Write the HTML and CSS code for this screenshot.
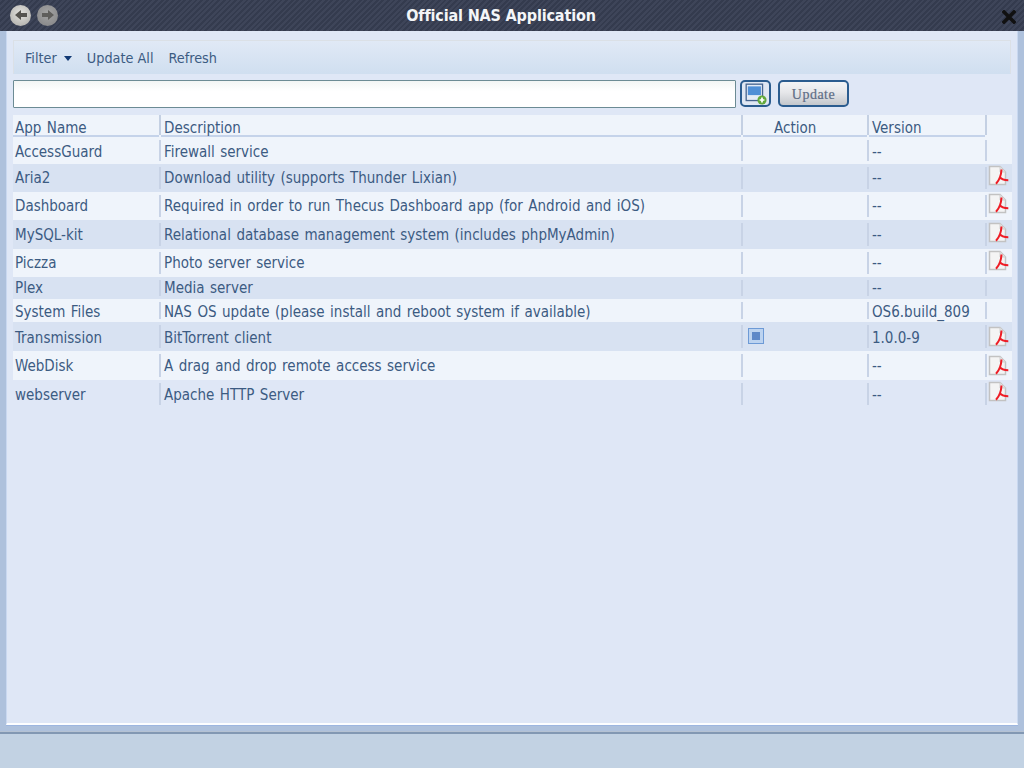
FILE: index.html
```html
<!DOCTYPE html>
<html lang="en">
<head>
<meta charset="utf-8">
<title>Official NAS Application</title>
<link rel="stylesheet" href="styles.css">
</head>
<body>
<svg class="defs" width="0" height="0" aria-hidden="true">
  <symbol id="pdf" viewBox="0 0 22 22">
    <path d="M2.500 1.500H13L18.500 7V19.500H2.500Z" fill="#f4f4f4" stroke="#c2c2c2" stroke-width="1.500"/>
    <path d="M13 1.500V7H18.500" fill="#e2e2e2" stroke="#cfcfcf"/>
    <path d="M14.500 4.500C14.200 9.500 13 14.500 9 18.800M12.600 11.500C14 14 17 15.300 21.300 15.300" fill="none" stroke="#ee1c25" stroke-width="2"/>
  </symbol>
</svg>
<div class="titlebar">
  <div class="nav">
    <span class="round back"><svg width="14" height="14" viewBox="0 0 14 14"><path d="M1 7L7 2V5H13V9H7V12Z" fill="#55534f"/></svg></span>
    <span class="round fwd"><svg width="14" height="14" viewBox="0 0 14 14"><path d="M13 7L7 2V5H1V9H7V12Z" fill="#5f5e5c"/></svg></span>
  </div>
  <h1 class="title">Official NAS Application</h1>
  <svg class="close" width="14" height="14" viewBox="0 0 14 14"><path d="M2 2L12 12M12 2L2 12" stroke="#111" stroke-width="3.600" stroke-linecap="square"/></svg>
</div>
<main class="window">
  <div class="toolbar">
    <span class="tool">Filter <i class="caret"></i></span>
    <span class="tool">Update All</span>
    <span class="tool">Refresh</span>
  </div>
  <div class="uploadrow">
    <div class="field"></div>
    <button class="iconbtn" type="button" aria-label="Browse">
      <svg width="24" height="24" viewBox="0 0 22 22">
        <rect x="2" y="2" width="15" height="15" fill="#e3ebf6" stroke="#46658f" stroke-width="1.200"/>
        <rect x="3.500" y="4" width="12" height="8" fill="#4f8fd6"/>
        <circle cx="16.500" cy="16.500" r="4.200" fill="#63a93c"/>
        <path d="M16.500 14.300V18.700M14.300 16.500H18.700" stroke="#fff" stroke-width="1.600"/>
      </svg>
    </button>
    <button class="updatebtn" type="button">Update</button>
  </div>
  <table class="apps">
    <colgroup><col class="c1"><col class="c2"><col class="c3"><col class="c4"><col class="c5"></colgroup>
    <thead>
      <tr><th>App Name</th><th>Description</th><th class="act">Action</th><th>Version</th><th class="nohead"></th></tr>
    </thead>
    <tbody>
      <tr class="h26 lt first"><td>AccessGuard</td><td>Firewall service</td><td></td><td>--</td><td></td></tr>
      <tr class="h28 dk"><td>Aria2</td><td>Download utility (supports Thunder Lixian)</td><td></td><td>--</td><td class="pdf"><svg width="22" height="22"><use href="#pdf"/></svg></td></tr>
      <tr class="h28 lt"><td>Dashboard</td><td>Required in order to run Thecus Dashboard app (for Android and iOS)</td><td></td><td>--</td><td class="pdf"><svg width="22" height="22"><use href="#pdf"/></svg></td></tr>
      <tr class="h29 dk"><td>MySQL-kit</td><td>Relational database management system (includes phpMyAdmin)</td><td></td><td>--</td><td class="pdf"><svg width="22" height="22"><use href="#pdf"/></svg></td></tr>
      <tr class="h28 lt"><td>Piczza</td><td>Photo server service</td><td></td><td>--</td><td class="pdf"><svg width="22" height="22"><use href="#pdf"/></svg></td></tr>
      <tr class="h22 dk"><td>Plex</td><td>Media server</td><td></td><td>--</td><td></td></tr>
      <tr class="h23 lt first"><td>System Files</td><td>NAS OS update (please install and reboot system if available)</td><td></td><td>OS6.build_809</td><td></td></tr>
      <tr class="h29 dk first"><td>Transmission</td><td>BitTorrent client</td><td class="radiocell"><span class="radio"></span></td><td>1.0.0-9</td><td class="pdf low"><svg width="22" height="22"><use href="#pdf"/></svg></td></tr>
      <tr class="h29 lt"><td>WebDisk</td><td>A drag and drop remote access service</td><td></td><td>--</td><td class="pdf low"><svg width="22" height="22"><use href="#pdf"/></svg></td></tr>
      <tr class="h28 nobg first"><td>webserver</td><td>Apache HTTP Server</td><td></td><td>--</td><td class="pdf"><svg width="22" height="22"><use href="#pdf"/></svg></td></tr>
    </tbody>
  </table>
</main>
<footer class="bottom"></footer>
</body>
</html>
```

FILE: styles.css
```css
* { box-sizing: border-box; }
html, body { margin: 0; height: 768px; overflow: hidden; }
body {
  display: flex;
  flex-direction: column;
  background: #aec1dc;
  font-family: "DejaVu Sans Condensed", "DejaVu Sans", sans-serif;
  font-size: 15px;
  word-spacing: 1.200px;
  color: #3c5b82;
}
.defs { position: absolute; }
.titlebar {
  height: 31px;
  flex: none;
  display: flex;
  align-items: center;
  justify-content: space-between;
  padding: 0 8px 0 10px;
  position: relative;
  background-color: #3a4256;
  background-image: repeating-linear-gradient(135deg, #3e4559 0 2px, #343b4e 2px 4px);
}
.nav { display: flex; gap: 6px; margin-top: -1px; }
.round {
  width: 21px;
  height: 21px;
  border-radius: 50%;
  display: flex;
  align-items: center;
  justify-content: center;
}
.back { background: radial-gradient(circle at 50% 40%, #e4e3df, #a9a8a4); }
.fwd { background: radial-gradient(circle at 50% 40%, #a5a5a5, #828284); }
.title {
  position: absolute;
  left: 0;
  right: 22px;
  top: 6px;
  margin: 0;
  text-align: center;
  font: bold 16px/20px "DejaVu Sans Condensed", "DejaVu Sans", sans-serif;
  letter-spacing: -0.150px;
  word-spacing: 0;
  color: #f4f6f8;
}
.close { margin-top: 2px; }
.window {
  flex: none;
  height: 694px;
  margin: 0 6px;
  background: #dfe7f6;
  border-bottom: 2px solid #fdfeff;
  border-left: 1px solid #c9d8f0;
  border-right: 1px solid #c9d8f0;
  box-shadow: 0 1px 0 #9db6e0;
  padding: 9px 6px 0 6px;
}
.toolbar {
  height: 34px;
  display: flex;
  align-items: center;
  gap: 15px;
  padding: 1px 0 0 11px;
  background: linear-gradient(#e0e9f6, #d0dff0);
  border: 1px solid #dbe0e6;
  border-bottom: 1px solid #d0dff0;
  font-size: 14.300px;
  word-spacing: 0;
}
.caret {
  display: inline-block;
  border: 4px solid transparent;
  border-top: 5px solid #123a75;
  border-bottom: 0;
  vertical-align: 2px;
  margin-left: 3px;
}
.uploadrow {
  display: flex;
  align-items: flex-start;
  height: 28px;
  margin-top: 6px;
}
.field {
  width: 723px;
  height: 28px;
  background: linear-gradient(#f2f5f4, #fff 40%);
  border: 1px solid #6c8b94;
  border-radius: 1px;
}
.iconbtn {
  width: 31px;
  height: 27px;
  margin-left: 4px;
  padding: 0;
  display: flex;
  align-items: center;
  justify-content: center;
  background: #dfe7f3;
  border: 2px solid #2b5c8f;
  border-radius: 5px;
}
.updatebtn {
  width: 71px;
  height: 27px;
  margin-left: 7px;
  padding: 2px 0 0;
  border: 2px solid #2b5c8f;
  border-radius: 5px;
  background: linear-gradient(#f3f4f6, #e6e7ea 45%, #c4c7cc);
  font: 14px "Liberation Serif", serif;
  letter-spacing: .5px;
  -webkit-text-stroke: .2px #5e6d85;
  color: #5e6d85;
}
.apps {
  width: 999px;
  margin-top: 7px;
  table-layout: fixed;
  border-collapse: collapse;
}
.c1 { width: 148px; }
.c2 { width: 582px; }
.c3 { width: 126px; }
.c4 { width: 118px; }
.c5 { width: 25px; }
th {
  height: 22px;
  padding: 4px 0 0 3px;
  text-align: left;
  font-weight: normal;
  white-space: nowrap;
  background:
    linear-gradient(#c4d0e3, #c4d0e3) right top / 2px 20px no-repeat,
    linear-gradient(#c5d3ea, #c5d3ea) left bottom / calc(100% - 2px) 2px no-repeat,
    #eff4fb;
}
th:first-child, td:first-child { padding-left: 2px; }
th.act { padding-left: 31px; }
th.nohead { background: #eff4fb; }
td {
  padding: 0 0 0 3px;
  white-space: nowrap;
  background-image: linear-gradient(#c8d3e6, #c8d3e6);
  background-position: right center;
  background-size: 2px calc(100% - 6px);
  background-repeat: no-repeat;
}
td:last-child { background-image: none; }
tr.lt td { background-color: #eff4fb; }
tr.dk td { background-color: #d8e2f2; }
tr.first td { padding-top: 2px; }
.h22 td { height: 22px; }
.h23 td { height: 23px; }
.h26 td { height: 27px; }
.h28 td { height: 28px; }
.h29 td { height: 29px; }
tr td.pdf { padding: 0 0 4px 0; line-height: 0; vertical-align: middle; }
tr td.pdf.low { padding-bottom: 0; }
tr td.radiocell { padding: 6px 0 0 5px; vertical-align: top; line-height: 0; }
.radio {
  display: inline-block;
  width: 16px;
  height: 16px;
  background: #bcd3f0;
  border: 1px solid #6d9ad6;
  position: relative;
}
.radio::after {
  content: "";
  position: absolute;
  inset: 3px;
  background: #5d88c8;
}
.bottom {
  flex: none;
  margin-top: 7px;
  height: 36px;
  background: #c2d2e3;
  border-top: 2px solid #8298b3;
  box-shadow: 0 -1px 0 #b5c2d3;
}
```
